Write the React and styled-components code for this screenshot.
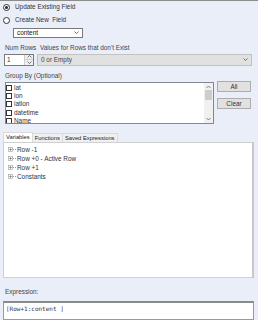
import React from "react";
import styled, { createGlobalStyle } from "styled-components";

const Global = createGlobalStyle`
  html, body {
    margin: 0;
    padding: 0;
    background: #eaeef9;
  }
  body {
    font-family: "Liberation Sans", Arial, sans-serif;
    font-size: 6.4px;
    color: #333;
  }
`;

const fields = ["lat", "lon", "latlon", "datetime", "Name"];
const treeItems = ["Row -1", "Row +0 - Active Row", "Row +1", "Constants"];

const App = () => {
  return (
    <Frame>
      <Global />
      <RadioRow $top={2}>
        <Radio $checked />
        <span>Update Existing Field</span>
      </RadioRow>
      <RadioRow $top={5}>
        <Radio />
        <span>Create New&nbsp; Field</span>
      </RadioRow>
      <Select $left={10} $width={70} $top={4}>
        <span>content</span>
        <Chevron />
      </Select>
      <LabelRow>
        <Label $width={35}>Num Rows</Label>
        <Label>Values for Rows that don't Exist</Label>
      </LabelRow>
      <ControlRow>
        <NumBox>
          <span>1</span>
          <Spinner>
            <SpinArrow $up>
              <svg width="5" height="3" viewBox="0 0 5 3">
                <path d="M0.5 2.5 L2.5 0.5 L4.5 2.5" fill="none" stroke="#555" strokeWidth="0.8" />
              </svg>
            </SpinArrow>
            <SpinArrow>
              <svg width="5" height="3" viewBox="0 0 5 3">
                <path d="M0.5 0.5 L2.5 2.5 L4.5 0.5" fill="none" stroke="#555" strokeWidth="0.8" />
              </svg>
            </SpinArrow>
          </Spinner>
        </NumBox>
        <Select $disabled $width={215}>
          <span>0 or Empty</span>
          <Chevron />
        </Select>
      </ControlRow>
      <SectionLabel>Group By (Optional)</SectionLabel>
      <GroupRow>
        <ListBox>
          <Items>
            {fields.map((f) => (
              <Item key={f}>
                <Check />
                <span>{f}</span>
              </Item>
            ))}
          </Items>
          <ScrollBar>
            <svg width="5" height="4" viewBox="0 0 5 4">
              <path d="M0.5 3 L2.5 1 L4.5 3" fill="none" stroke="#666" strokeWidth="0.8" />
            </svg>
            <Thumb />
            <Spacer />
            <svg width="5" height="4" viewBox="0 0 5 4">
              <path d="M0.5 1 L2.5 3 L4.5 1" fill="none" stroke="#666" strokeWidth="0.8" />
            </svg>
          </ScrollBar>
        </ListBox>
        <Buttons>
          <Button>All</Button>
          <Button>Clear</Button>
        </Buttons>
      </GroupRow>
      <Tabs>
        <Tab $active>Variables</Tab>
        <Tab>Functions</Tab>
        <Tab>Saved Expressions</Tab>
      </Tabs>
      <Panel>
        {treeItems.map((t) => (
          <TreeRow key={t}>
            <Expander>
              <svg width="5" height="5" viewBox="0 0 5 5">
                <rect x="0.5" y="0.5" width="4" height="4" fill="#fff" stroke="#999" strokeWidth="0.6" />
                <path d="M1.3 2.5 H3.7 M2.5 1.3 V3.7" stroke="#555" strokeWidth="0.6" />
              </svg>
            </Expander>
            <Dash />
            <span>{t}</span>
          </TreeRow>
        ))}
      </Panel>
      <SectionLabel $top={10}>Expression:</SectionLabel>
      <ExprBox>[Row+1:content ]</ExprBox>
    </Frame>
  );
};

const Frame = styled.div`
  width: 256px;
  height: 319px;
  overflow: hidden;
  border-top: 1px solid #8c8c8c;
  border-right: 2px solid #d4d6dc;
  background: #eaeef9;
  padding: 0 0 0 3px;
  box-sizing: content-box;
  display: flex;
  flex-direction: column;
`;

const RadioRow = styled.div`
  display: flex;
  align-items: center;
  gap: 5px;
  height: 8px;
  margin-top: ${(p) => p.$top}px;
  line-height: 8px;
`;

const Radio = styled.div`
  width: 7px;
  height: 7px;
  box-sizing: border-box;
  border-radius: 50%;
  border: 1px solid #333;
  background: #fff;
  display: flex;
  align-items: center;
  justify-content: center;
  &::after {
    content: "";
    display: ${(p) => (p.$checked ? "block" : "none")};
    width: 3px;
    height: 3px;
    border-radius: 50%;
    background: #222;
  }
`;

const Select = styled.div`
  margin-left: ${(p) => p.$left || 0}px;
  margin-top: ${(p) => p.$top || 0}px;
  width: ${(p) => p.$width}px;
  height: ${(p) => (p.$disabled ? 12 : 10)}px;
  box-sizing: border-box;
  border: 1px solid ${(p) => (p.$disabled ? "#c2c2c2" : "#7a7a7a")};
  background: ${(p) => (p.$disabled ? "#e1e1e1" : "#fff")};
  display: flex;
  align-items: center;
  justify-content: space-between;
  padding: 0 3px;
  span {
    color: ${(p) => (p.$disabled ? "#444" : "#111")};
  }
`;

const Chevron = () => (
  <svg width="5" height="3" viewBox="0 0 5 3">
    <path d="M0.5 0.5 L2.5 2.5 L4.5 0.5" fill="none" stroke="#555" strokeWidth="0.8" />
  </svg>
);

const LabelRow = styled.div`
  display: flex;
  margin-top: 6px;
  padding-left: 2px;
  height: 8px;
  line-height: 8px;
`;

const Label = styled.div`
  width: ${(p) => (p.$width ? `${p.$width}px` : "auto")};
  color: #444;
`;

const ControlRow = styled.div`
  display: flex;
  align-items: center;
  gap: 3px;
  margin-top: 2px;
  padding-left: 1px;
`;

const NumBox = styled.div`
  width: 30px;
  height: 12px;
  box-sizing: border-box;
  border: 1px solid #7a7a7a;
  background: #fff;
  display: flex;
  justify-content: space-between;
  padding-left: 2px;
  span {
    line-height: 10px;
  }
`;

const Spinner = styled.div`
  width: 8px;
  display: flex;
  flex-direction: column;
  border-left: 1px solid #ccc;
`;

const SpinArrow = styled.div`
  flex: 1;
  background: #f0f0f0;
  display: flex;
  align-items: center;
  justify-content: center;
  border-bottom: ${(p) => (p.$up ? "1px solid #ccc" : "none")};
`;

const SectionLabel = styled.div`
  margin-top: ${(p) => p.$top || 6}px;
  padding-left: 2px;
  height: 8px;
  line-height: 8px;
  color: #444;
`;

const GroupRow = styled.div`
  display: flex;
  margin-top: 2px;
  padding-left: 2px;
  gap: 3px;
`;

const ListBox = styled.div`
  width: 209px;
  height: 42px;
  box-sizing: border-box;
  border: 1px solid #828790;
  background: #fff;
  display: flex;
  overflow: hidden;
`;

const Items = styled.div`
  flex: 1;
  padding-top: 1px;
  display: flex;
  flex-direction: column;
`;

const Item = styled.div`
  display: flex;
  align-items: center;
  gap: 2px;
  height: 8.3px;
  flex: none;
  line-height: 8px;
`;

const Check = styled.div`
  width: 6px;
  height: 6px;
  box-sizing: border-box;
  border: 1px solid #333;
  background: #fff;
`;

const ScrollBar = styled.div`
  width: 9px;
  background: #f0f0f0;
  display: flex;
  flex-direction: column;
  align-items: center;
  padding: 2px 0 2px;
  box-sizing: border-box;
`;

const Thumb = styled.div`
  width: 7px;
  height: 10px;
  margin-top: 1px;
  background: #cdcdcd;
`;

const Spacer = styled.div`
  flex: 1;
`;

const Buttons = styled.div`
  display: flex;
  flex-direction: column;
  gap: 6px;
  margin-top: -1px;
`;

const Button = styled.div`
  width: 34px;
  height: 11px;
  box-sizing: border-box;
  border: 1px solid #adadad;
  background: #e1e1e1;
  display: flex;
  align-items: center;
  justify-content: center;
  color: #333;
`;

const Tabs = styled.div`
  display: flex;
  margin-top: 8px;
  height: 10px;
  align-items: flex-end;
`;

const Tab = styled.div`
  height: ${(p) => (p.$active ? 10 : 9)}px;
  box-sizing: border-box;
  padding: 0 2px;
  display: flex;
  align-items: center;
  border: 1px solid #d9d9d9;
  border-bottom: none;
  background: ${(p) => (p.$active ? "#fff" : "#f0f0f0")};
  margin-right: -1px;
  font-size: 5.8px;
  color: #222;
`;

const Panel = styled.div`
  width: 251px;
  height: 143px;
  box-sizing: border-box;
  border: 1px solid #d0d0d0;
  border-right: 2px solid #c8c8c8;
  background: #fff;
  padding: 2px 0 0 3px;
  display: flex;
  flex-direction: column;
`;

const TreeRow = styled.div`
  display: flex;
  align-items: center;
  height: 9px;
  line-height: 9px;
  color: #333;
`;

const Expander = styled.div`
  display: flex;
  align-items: center;
  margin-left: 1px;
`;

const Dash = styled.div`
  width: 3px;
  height: 0;
  border-top: 1px dotted #999;
  margin: 0 1px 0 0;
`;

const ExprBox = styled.div`
  margin-top: 5px;
  width: 251px;
  height: 20px;
  box-sizing: border-box;
  border: 1px solid #9a9a9a;
  border-top: 2px solid #8a8a8a;
  background: #fff;
  padding: 2px 2px;
  font-family: "DejaVu Sans Mono", "Liberation Mono", monospace;
  font-size: 6px;
  color: #333;
`;

export default App;
